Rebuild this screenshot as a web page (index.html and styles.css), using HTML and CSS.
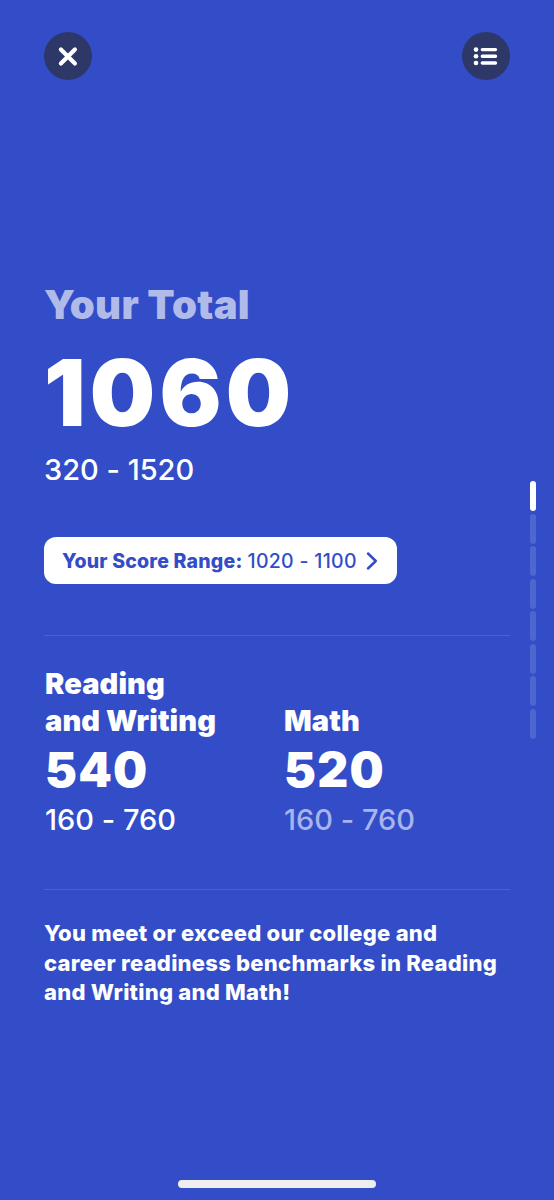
FILE: index.html
```html
<!DOCTYPE html>
<html lang="en">
<head>
    <meta charset="UTF-8">
    <title>Your Scores</title>
    <link rel="stylesheet" href="styles.css">
</head>
<body>
    <div class="screen">
        <header class="top-bar">
            <button class="round-button" aria-label="Close">
                <svg viewBox="0 0 48 48"><path d="M16.9 17.5l14 14M30.9 17.5l-14 14" fill="none" stroke="#fff" stroke-width="4.2" stroke-linecap="round"/></svg>
            </button>
            <button class="round-button" aria-label="Contents">
                <svg viewBox="0 0 48 48">
                    <g fill="#fff"><circle cx="14" cy="17.6" r="2.3"/><circle cx="14" cy="24.3" r="2.3"/><circle cx="14" cy="31" r="2.3"/></g>
                    <path d="M20.3 17.6h13.2M20.3 24.3h13.2M20.3 31h13.2" fill="none" stroke="#fff" stroke-width="3.4" stroke-linecap="round"/>
                </svg>
            </button>
        </header>

        <main class="content">
            <h1 class="total-label">Your Total</h1>
            <div class="total-score">1060</div>
            <div class="total-range">320 - 1520</div>

            <button class="score-range">
                <strong>Your Score Range:</strong>
                <span>1020 - 1100</span>
                <svg class="chevron" viewBox="0 0 12 20"><path d="M2 2.5l7.8 7.5L2 17.5" fill="none" stroke="#324dc7" stroke-width="2.5" stroke-linecap="round" stroke-linejoin="round"/></svg>
            </button>

            <section class="sections">
                <div class="section">
                    <h2 class="section-name">Reading<br>and Writing</h2>
                    <div class="section-score">540</div>
                    <div class="section-range">160 - 760</div>
                </div>
                <div class="section">
                    <h2 class="section-name">Math</h2>
                    <div class="section-score">520</div>
                    <div class="section-range faded">160 - 760</div>
                </div>
            </section>

            <p class="message">You meet or exceed our college and career readiness benchmarks in Reading and Writing and Math!</p>
        </main>

        <nav class="pager">
            <span class="page active"></span>
            <span class="page"></span>
            <span class="page"></span>
            <span class="page"></span>
            <span class="page"></span>
            <span class="page"></span>
            <span class="page"></span>
            <span class="page"></span>
        </nav>

        <div class="home-indicator"></div>
    </div>
</body>
</html>
```
FILE: styles.css
```css
* {
    box-sizing: border-box;
}
body {
    margin: 0;
    background-color: #324dc7;
    color: #fff;
    font-family: Inter, "Liberation Sans", sans-serif;
    font-feature-settings: "calt" 0;
}
h1, h2, p {
    margin: 0;
}
button {
    border: none;
    padding: 0;
    font-family: inherit;
    font-feature-settings: inherit;
    cursor: pointer;
}
.screen {
    position: relative;
    display: flex;
    flex-direction: column;
    height: 1200px;
    padding: 32px 44px 12px;
    overflow: hidden;
}
.top-bar {
    display: flex;
    justify-content: space-between;
}
.round-button {
    width: 48px;
    height: 48px;
    border-radius: 50%;
    background-color: #2d3869;
}
.round-button svg {
    display: block;
}
.content {
    flex: 1;
    padding-top: 201px;
}
.total-label {
    font-size: 40px;
    font-weight: 900;
    line-height: 48px;
    letter-spacing: 0.3px;
    color: #b0bbe9;
}
.total-score {
    margin-top: 17px;
    font-size: 92px;
    font-weight: 900;
    line-height: 94px;
    letter-spacing: 4.2px;
}
.total-range {
    margin-top: 12px;
    font-size: 29px;
    font-weight: 500;
    line-height: 36px;
}
.score-range {
    display: flex;
    align-items: center;
    width: 353px;
    height: 47px;
    margin-top: 49px;
    padding: 0 19px 0 18px;
    border-radius: 12px;
    background-color: #fff;
    color: #324dc7;
    font-size: 19.5px;
    letter-spacing: 0.2px;
}
.score-range strong {
    font-weight: 800;
}
.score-range span {
    margin-left: 5px;
    font-weight: 500;
    letter-spacing: 0.3px;
}
.chevron {
    width: 12px;
    height: 20px;
    margin-left: auto;
}
.sections {
    display: grid;
    grid-template-columns: 239px 1fr;
    align-items: end;
    height: 255px;
    margin-top: 51px;
    padding-left: 1px;
    padding-bottom: 51px;
    border-top: 1px solid #4a62ce;
    border-bottom: 1px solid #4a62ce;
}
.section-name {
    font-size: 29px;
    font-weight: 900;
    line-height: 37px;
    letter-spacing: 0.1px;
}
.section-score {
    margin-top: 6px;
    font-size: 48px;
    font-weight: 900;
    line-height: 50px;
    letter-spacing: 1.2px;
}
.section-range {
    margin-top: 7px;
    font-size: 29px;
    font-weight: 500;
    line-height: 36px;
}
.faded {
    color: #a7b4ee;
}
.message {
    margin-top: 29px;
    font-size: 22px;
    font-weight: 800;
    line-height: 29.5px;
    letter-spacing: 0.25px;
}
.pager {
    position: absolute;
    top: 481px;
    right: 18px;
    display: flex;
    flex-direction: column;
    gap: 2.5px;
}
.page {
    width: 6px;
    height: 30px;
    border-radius: 3px;
    background-color: #4e66d0;
}
.page.active {
    background-color: #fff;
}
.home-indicator {
    align-self: center;
    width: 198px;
    height: 8px;
    border-radius: 4px;
    background-color: #eee;
}
```
